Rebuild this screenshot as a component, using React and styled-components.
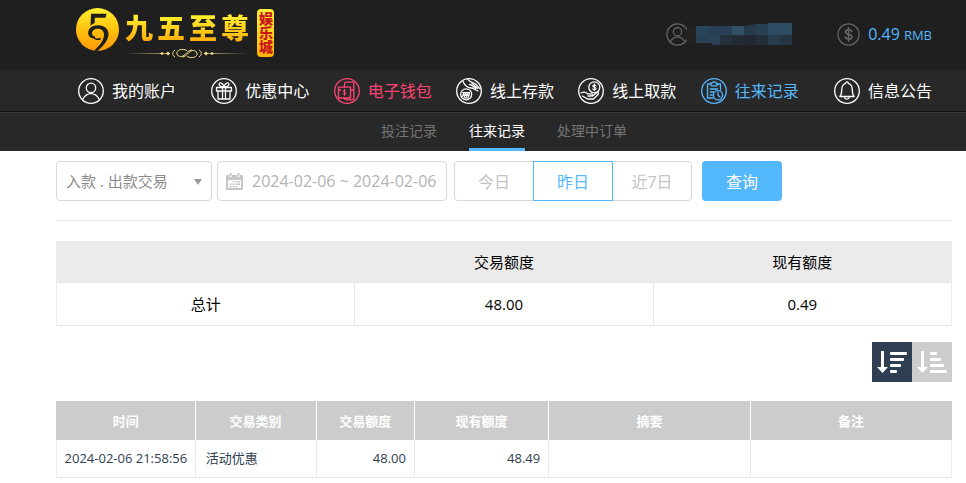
import React from "react";
import styled, { createGlobalStyle, css } from "styled-components";

const GlobalStyle = createGlobalStyle`
  *, *::before, *::after { box-sizing: border-box; }
  body { margin: 0; background: #fff; }
  body, button, input, select, table {
    font-family: "Open Sans", "Noto Sans CJK SC", sans-serif;
  }
`;

const TopBar = styled.header`
  display: flex;
  justify-content: space-between;
  align-items: flex-start;
  height: 70px;
  padding: 8px 34px 0 76px;
  background: #1f1f1f;
`;

const Brand = styled.a`
  display: flex;
  align-items: flex-start;
  text-decoration: none;
`;

const BrandTitle = styled.span`
  display: flex;
  flex-direction: column;
  align-items: center;
  margin: 0 8px 0 5px;
`;

const BrandChars = styled.span`
  display: flex;
  gap: 4px;
  height: 40px;
  font-size: 28px;
  font-weight: 900;
  line-height: 40px;
  color: transparent;
  background: linear-gradient(#ffef2e 20%, #ffae0a 85%);
  background-clip: text;
  -webkit-background-clip: text;
`;

const BrandTag = styled.span`
  width: 17px;
  height: 48px;
  margin-top: 1px;
  border-radius: 4px;
  background: linear-gradient(#fff23a, #ffb200);
  color: #c8161d;
  font-family: "Noto Sans CJK SC", sans-serif;
  font-size: 14px;
  font-weight: 900;
  line-height: 17px;
  text-align: center;
  writing-mode: vertical-rl;
`;

const Status = styled.div`
  display: flex;
  align-items: center;
  height: 52px;
`;

const UserName = styled.span`
  display: block;
  height: 24px;
  margin: 0 45px 0 -4px;
`;

const Balance = styled.span`
  margin-left: 8px;
  color: #54b8ff;
  font-size: 16px;
  line-height: 24px;
  small { margin-left: 4px; font-size: 13px; }
`;

const MainNav = styled.nav`
  display: flex;
  justify-content: space-between;
  align-items: center;
  height: 42px;
  padding: 0 34px 0 78px;
  background: #282828;
  border-top: 1px solid #242424;
  border-bottom: 1px solid #101010;
`;

const tones = { plain: "#fff", pink: "#ff4474", blue: "#54b8ff" };

const NavLink = styled.a`
  display: flex;
  align-items: center;
  gap: 8px;
  color: ${(p) => tones[p.$tone]};
  font-size: 16px;
  line-height: 24px;
  white-space: nowrap;
  text-decoration: none;
  &:first-child { margin-right: 11px; }
  &:last-child { margin-left: 11px; }
`;

const SubNav = styled.nav`
  display: flex;
  justify-content: center;
  gap: 32px;
  height: 39px;
  padding: 0 14px 0 56px;
  background: #282828;
  border-top: 1px solid #3a3a3a;
`;

const SubLink = styled.a`
  font-size: 14px;
  line-height: 35px;
  text-decoration: none;
  color: ${(p) => (p.$active ? "#fff" : "#757575")};
  border-bottom: 3px solid ${(p) => (p.$active ? "#54b8ff" : "transparent")};
`;

const Content = styled.main`
  padding: 10px 14px 0 56px;
`;

const Filters = styled.form`
  display: flex;
  padding-bottom: 19px;
  border-bottom: 1px solid #e8e8e8;
`;

const Field = styled.label`
  position: relative;
  display: flex;
  flex: none;
  margin-right: ${(p) => p.$gap}px;
`;

const box = css`
  height: 40px;
  border: 1px solid #d9d9d9;
  border-radius: 4px;
  background: #fff;
  outline: none;
`;

const TypeSelect = styled.select`
  ${box}
  appearance: none;
  width: 156px;
  padding: 0 28px 0 9px;
  color: #8c8c8c;
  font-size: 15px;
`;

const Caret = styled.svg`
  position: absolute;
  right: 10px;
  top: 18px;
  pointer-events: none;
`;

const DateInput = styled.input`
  ${box}
  width: 230px;
  padding: 0 4px 0 34px;
  color: #b3b3b3;
  font-size: 16px;
`;

const CalendarIcon = styled.svg`
  position: absolute;
  left: 9px;
  top: 12px;
`;

const Segments = styled.div`
  display: flex;
  margin-right: 10px;
`;

const Segment = styled.button`
  width: 80px;
  height: 40px;
  padding: 0;
  background: #fff;
  font-size: 16px;
  color: ${(p) => (p.$active ? "#54b8ff" : "#c4c4c4")};
  border: 1px solid ${(p) => (p.$active ? "#54b8ff" : "#d9d9d9")};
  z-index: ${(p) => (p.$active ? 1 : 0)};
  &:first-child { border-radius: 4px 0 0 4px; }
  &:last-child { border-radius: 0 4px 4px 0; }
  & + & { margin-left: -1px; }
`;

const Submit = styled.button`
  width: 80px;
  height: 40px;
  padding: 0;
  border: 0;
  border-radius: 4px;
  background: #54b8ff;
  color: #fff;
  font-size: 16px;
`;

const Summary = styled.table`
  width: 100%;
  margin-top: 20px;
  border-collapse: collapse;
  table-layout: fixed;
  font-size: 15px;
  line-height: 22px;
  color: #000;
  text-align: center;
  th, td { padding: 0; border: 1px solid #ebebeb; font-weight: 400; }
  thead th { height: 41px; background: #ebebeb; }
  tbody th, td { height: 43px; }
`;

const SortBar = styled.div`
  display: flex;
  justify-content: flex-end;
  margin: 16px 0 19px;
`;

const SortButton = styled.button`
  width: 40px;
  height: 40px;
  padding: 0;
  border: 0;
  background: ${(p) => (p.$active ? "#2f3e52" : "#ccc")};
  svg { display: block; }
`;

const Records = styled.table`
  width: 100%;
  border-collapse: collapse;
  table-layout: fixed;
  font-size: 13px;
  line-height: 20px;
  color: #2f3e52;
  th {
    height: 39px;
    padding: 0;
    background: #ccc;
    border-left: 1px solid #ccc;
    color: #fff;
    font-weight: 700;
  }
  th + th { border-left-color: #fff; }
  td { height: 37px; border: 1px solid #ebebeb; border-top: 0; white-space: nowrap; }
`;

const Col = styled.col`
  width: ${(p) => p.$share}%;
`;

const cellPadding = { left: 10, right: 8, center: 0 };

const Cell = styled.td`
  padding: 0 ${(p) => cellPadding[p.$align || "left"]}px;
  text-align: ${(p) => p.$align || "left"};
`;

const LineIcon = styled.svg`
  flex: none;
  fill: none;
  stroke: currentColor;
  stroke-width: 1.3;
  stroke-linecap: round;
  stroke-linejoin: round;
`;

const MutedIcon = styled(LineIcon)`
  color: #666;
`;

const shapes = {
  user: (
    <>
      <circle cx="13" cy="9.9" r="4.7" />
      <path d="M4.7 21.5C6.6 17.6 9.5 15.6 13 15.6s6.4 2 8.3 5.9" />
    </>
  ),
  gift: (
    <>
      <path d="M5.5 9.5h15v3.5h-15zM7 13v8h12v-8M11.500 9.500v11.500M14.500 9.500v11.500" />
      <path d="M13 9C9 9 7 7 8.500 5.200 10 4 12.200 6 13 9c.8-3 3-5 4.500-3.800C19 7 17 9 13 9z" />
    </>
  ),
  wallet: (
    <>
      <path d="M10.500 9.200V6q0-1.800 1.800-1.800H18q1.800 0 1.800 1.800v14q0 1.800-1.800 1.800h-5.700q-1.800 0-1.800-1.500M15 19.500h.5" />
      <path d="M4.500 9.200H16.500V20H4.500zM4.500 12h2M16.500 12h3" />
      <path d="M12 12.600c-.5-.7-3-.8-3 .5s3 .8 3 2.200-2.500 1.200-3.200.4M10.500 11.500v6" strokeWidth="1" />
    </>
  ),
  deposit: (
    <>
      <path d="M7 3.500c2 4.500 5 6.500 8.500 6.500 2 0 3.600 2.200 6.500 2.800M12 1.500c2 3 5 2.800 7.200 4.300 1.600 1.200 2.500 3.300 5 5" />
      <path d="M13.500 6.500c3 .2 4 2.700 6.500 4.200M16 5.500c2 1 3 3 5.500 4.800" />
      <circle cx="10.200" cy="16.300" r="5.500" />
      <path d="M6.800 14.600h6.800M6.600 18.500l1-3 1 3 1-3 1 3 1-3 1 3 1-3M8 19.900h4.500" strokeWidth="1.100" />
    </>
  ),
  withdraw: (
    <>
      <circle cx="16.300" cy="9.300" r="5.500" />
      <path d="M18 7.700c-.7-1-3.300-1-3.300.4s3.400.9 3.400 2.500-2.700 1.500-3.500.4M16.300 5.800v7" strokeWidth="1.100" />
      <path d="M3 15c3-1.500 5-.8 6.500.8h4c1.500.5 1 2.200-.5 2.200h-3M14.500 18l4.500-3.500c1.500-.5 2 1 1 2L15.500 21H9.500L4.500 18" />
    </>
  ),
  records: (
    <>
      <path d="M10 6H6.500v14H12M16 6h3.500v6M10 4.800h1.500q1.500-2.300 3 0H16v3h-6zM9.300 11h7.200M9.300 14h3.200M9.300 17h2" />
      <circle cx="17" cy="17.200" r="4.600" />
      <path d="M17 14.500v2.800l2 1.700" />
    </>
  ),
  bell: (
    <>
      <path d="M5.800 18.500h14.400c-1.500-1.500-1.900-3-1.900-6.500 0-3.600-1.500-5.900-4-6.600 0-2.100-2.600-2.100-2.600 0-2.500.7-4 3-4 6.600 0 3.500-.4 5-1.900 6.500z" />
      <path d="M10.700 19c.4 2.800 4.200 2.800 4.600 0" />
    </>
  ),
};

function NavIcon({ name }) {
  return (
    <LineIcon width="26" height="26" viewBox="0 0 26 26" aria-hidden="true">
      <circle cx="13" cy="13" r="12.300" />
      {shapes[name]}
    </LineIcon>
  );
}

function LogoMark() {
  return (
    <svg width="44" height="44" viewBox="0 0 44 44" aria-hidden="true">
      <defs>
        <linearGradient id="gold" x1="0" y1="0" x2="0" y2="1">
          <stop offset="0" stopColor="#fff12e" />
          <stop offset="0.55" stopColor="#ffbd0c" />
          <stop offset="1" stopColor="#ff980a" />
        </linearGradient>
      </defs>
      <circle cx="21.500" cy="21.500" r="21.500" fill="url(#gold)" />
      <path d="M15 5.800H30.500L29.500 9.800H18.800V15C17 15.500 15.600 16.500 14.500 18Z" fill="#1f1f1f" />
      <path
        d="M18.500 30.300C15 30.500 12.200 28.500 12.200 25C12.200 20 16.500 17.300 22 17.300C28.500 17.300 32.500 21 32.500 26C32.500 32 27.500 38 21.500 43L18 42.800C23 38 28 32.500 28 27C28 23 25.500 20.800 22 20.800C18.500 20.800 16 22.500 16 25.500C16 27 17 28.200 18.500 28.500Z"
        fill="#1f1f1f"
      />
      <path d="M17.500 28.500C18.500 31.500 22 32 24.500 30.500" fill="none" stroke="#1f1f1f" strokeWidth="1.500" />
    </svg>
  );
}

function Ornament() {
  return (
    <svg width="124" height="11" viewBox="0 0 124 11" fill="none" stroke="#f7e28c" aria-hidden="true">
      <defs>
        <linearGradient id="fade">
          <stop offset="0" stopColor="#f7e28c" stopOpacity="0" />
          <stop offset="0.5" stopColor="#f7e28c" />
          <stop offset="1" stopColor="#f7e28c" stopOpacity="0" />
        </linearGradient>
      </defs>
      <path d="M0 5h45v1H0zM79 5h45v1H79z" fill="url(#fade)" stroke="none" />
      <path d="M50 2c-3 1.500-3 5.500 0 7M74 2c3 1.500 3 5.500 0 7" />
      <path d="M62 2.500C57 0 51 2 52 6c1 3 5 3.500 8 .5 2-2 4-4.500 7-4.500M62 8.500c5 2.500 11 .5 10-3.500-1-3-5-3.500-8-.5-2 2-4 4.500-7 4.500" />
      <path d="M37 4l2 1.500-2 1.500-2-1.500zM43 3.500l2 2-2 2-2-2zM87 4l2 1.500-2 1.500-2-1.500zM81 3.500l2 2-2 2-2-2z" fill="#f7e28c" stroke="none" />
    </svg>
  );
}

function MaskedName() {
  return (
    <svg width="107" height="24" viewBox="0 0 107 24" role="img" aria-label="用户名已隐藏">
      <path d="M0 9l5-4h6v15H4l-4-4z" fill="#222" />
      <path d="M11 4h12v9H11z" fill="#294559" />
      <path d="M23 4h24v9H23z" fill="#293f57" />
      <path d="M47 4h12v9H47z" fill="#2f5066" />
      <path d="M59 4l12-2v11H59z" fill="#263a4b" />
      <path d="M71 2h12v11H71z" fill="#293f54" />
      <path d="M83 1h24v12H83z" fill="#2d4b61" />
      <path d="M11 13h24v10h-8v-2H11z" fill="#2a4257" />
      <path d="M35 13h12v10H35z" fill="#24313b" />
      <path d="M47 13h12v10H47z" fill="#222b34" />
      <path d="M59 13h12v10H59z" fill="#232732" />
      <path d="M71 13h12v10H71z" fill="#252d38" />
      <path d="M83 13h12v10H83z" fill="#263c4c" />
      <path d="M95 13h12v10H95z" fill="#253541" />
    </svg>
  );
}

function SortIcon({ widths }) {
  return (
    <svg width="40" height="40" viewBox="0 0 40 40" fill="#fff" aria-hidden="true">
      <path d="M9 9h3v16h4l-5.500 6L5 25h4z" />
      {widths.map((w, i) => (
        <rect key={i} x="18" y={10 + i * 6} width={w} height="3" rx="1" />
      ))}
    </svg>
  );
}

const navItems = [
  ["user", "我的账户", "plain"],
  ["gift", "优惠中心", "plain"],
  ["wallet", "电子钱包", "pink"],
  ["deposit", "线上存款", "plain"],
  ["withdraw", "线上取款", "plain"],
  ["records", "往来记录", "blue"],
  ["bell", "信息公告", "plain"],
];

const subItems = ["投注记录", "往来记录", "处理中订单"];
const ranges = ["今日", "昨日", "近7日"];
const columns = [
  ["时间", 15.5],
  ["交易类别", 13.5],
  ["交易额度", 11],
  ["现有额度", 15],
  ["摘要", 22.5],
  ["备注", 22.5],
];

export default function App() {
  return (
    <>
      <GlobalStyle />
      <TopBar>
        <Brand href="#" aria-label="九五至尊娱乐城">
          <LogoMark />
          <BrandTitle>
            <BrandChars>
              {[..."九五至尊"].map((c) => (
                <span key={c}>{c}</span>
              ))}
            </BrandChars>
            <Ornament />
          </BrandTitle>
          <BrandTag>娱乐城</BrandTag>
        </Brand>
        <Status>
          <MutedIcon width="23" height="23" viewBox="0 0 26 26" aria-hidden="true">
            <circle cx="13" cy="13" r="12" />
            {shapes.user}
          </MutedIcon>
          <UserName>
            <MaskedName />
          </UserName>
          <MutedIcon width="23" height="23" viewBox="0 0 26 26" aria-hidden="true">
            <circle cx="13" cy="13" r="12" />
            <path d="M16.800 9.500c-1-2.500-7.300-2.500-7.300.6 0 3.400 7.400 2 7.400 5.600 0 3.200-6.700 3.200-7.900.3M13 5.500v15" strokeWidth="1.800" />
          </MutedIcon>
          <Balance>
            0.49<small>RMB</small>
          </Balance>
        </Status>
      </TopBar>
      <MainNav>
        {navItems.map(([icon, label, tone]) => (
          <NavLink key={icon} href="#" $tone={tone}>
            <NavIcon name={icon} />
            {label}
          </NavLink>
        ))}
      </MainNav>
      <SubNav>
        {subItems.map((label) => (
          <SubLink key={label} href="#" $active={label === "往来记录"}>
            {label}
          </SubLink>
        ))}
      </SubNav>
      <Content>
        <Filters onSubmit={(e) => e.preventDefault()}>
          <Field $gap={5}>
            <TypeSelect aria-label="交易类型">
              <option>入款 . 出款交易</option>
            </TypeSelect>
            <Caret width="8" height="6" viewBox="0 0 8 6" aria-hidden="true">
              <path d="M0 0h8L4 6z" fill="#999" />
            </Caret>
          </Field>
          <Field $gap={7}>
            <DateInput aria-label="日期范围" readOnly value="2024-02-06 ~ 2024-02-06" />
            <CalendarIcon width="17" height="17" viewBox="0 0 17 17" aria-hidden="true">
              <path d="M1 2h2v2h3V2h5v2h3V2h2q1 0 1 1v13q0 1-1 1H1q-1 0-1-1V3q0-1 1-1z" fill="#c6c6c6" />
              <path d="M3.500 0h2v3.500h-2zM11.500 0h2v3.500h-2z" fill="#c6c6c6" />
              <path d="M2 7h13v8H2z" fill="#fff" />
              <path d="M6.500 8h2v1.500h-2zM9.500 8h2v1.500h-2zM12 8h2v1.500h-2zM3.500 10.500h2V12h-2zM6.500 10.500h2V12h-2zM9.500 10.500h2V12h-2zM12 10.500h2V12h-2zM3.500 13h2v1.500h-2zM6.500 13h2v1.500h-2zM9.500 13h2v1.500h-2z" fill="#c6c6c6" />
            </CalendarIcon>
          </Field>
          <Segments>
            {ranges.map((label) => (
              <Segment key={label} type="button" $active={label === "昨日"}>
                {label}
              </Segment>
            ))}
          </Segments>
          <Submit type="submit">查询</Submit>
        </Filters>
        <Summary>
          <thead>
            <tr>
              <th aria-label="项目" />
              <th scope="col">交易额度</th>
              <th scope="col">现有额度</th>
            </tr>
          </thead>
          <tbody>
            <tr>
              <th scope="row">总计</th>
              <td>48.00</td>
              <td>0.49</td>
            </tr>
          </tbody>
        </Summary>
        <SortBar>
          <SortButton type="button" $active aria-label="降序">
            <SortIcon widths={[17, 14, 11, 7]} />
          </SortButton>
          <SortButton type="button" aria-label="升序">
            <SortIcon widths={[7, 11, 14, 17]} />
          </SortButton>
        </SortBar>
        <Records>
          <colgroup>
            {columns.map(([label, share]) => (
              <Col key={label} $share={share} />
            ))}
          </colgroup>
          <thead>
            <tr>
              {columns.map(([label]) => (
                <th key={label} scope="col">{label}</th>
              ))}
            </tr>
          </thead>
          <tbody>
            <tr>
              <Cell $align="center">2024-02-06 21:58:56</Cell>
              <Cell>活动优惠</Cell>
              <Cell $align="right">48.00</Cell>
              <Cell $align="right">48.49</Cell>
              <Cell />
              <Cell />
            </tr>
          </tbody>
        </Records>
      </Content>
    </>
  );
}
